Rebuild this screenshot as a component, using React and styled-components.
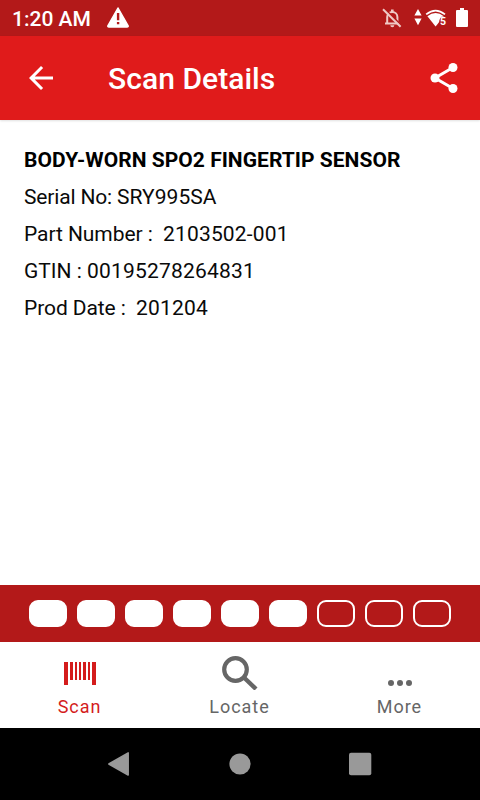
import React from 'react';
import styled, { createGlobalStyle } from 'styled-components';

const details = [
  { label: 'Serial No: ', value: 'SRY995SA', labelTracking: -0.16, valueTracking: 0.04 },
  { label: 'Part Number :  ', value: '2103502-001', labelTracking: -0.07, valueTracking: 0.18 },
  { label: 'GTIN : ', value: '00195278264831', labelTracking: 0, valueTracking: 0.2 },
  { label: 'Prod Date :  ', value: '201204', labelTracking: -0.08, valueTracking: 0.18 },
];

const TOTAL_STEPS = 9;
const FILLED_STEPS = 6;

const WarningIcon = () => (
  <svg width="24" height="22" viewBox="0 0 24 22">
    <path
      d="M12 1 L22 18.5 Q22.6 20 21 20 H3 Q1.4 20 2 18.5 Z"
      fill="#fff"
      stroke="#fff"
      strokeWidth="1.5"
      strokeLinejoin="round"
    />
    <path d="M10.9 6h2.4v7.2h-2.4zM10.9 15h2.4v2.3h-2.4z" fill="#b31919" />
  </svg>
);

const BellOffIcon = () => (
  <svg width="20" height="20" viewBox="0 0 20 20" fill="none" stroke="#f0c9c5">
    <path d="M5.2 15.2V9a5.1 5.1 0 0 1 10.2 0v6.2M3 15.4h14.5" strokeWidth="2" />
    <path d="M10.3 4V1.5" strokeWidth="2.6" />
    <path d="M8.3 17.2h4a2 2 0 0 1-4 0z" fill="#f0c9c5" stroke="none" />
    <path d="M2.2.2 19.4 17.4" stroke="#b31919" strokeWidth="1.6" />
    <path d="M1 1.2 18.6 18.8" strokeWidth="2" />
  </svg>
);

const DataIcon = () => (
  <svg width="8" height="18" viewBox="0 0 8 18" fill="#fff">
    <path d="M4 0 7.6 6.6H.4zM4 16.2.4 9.4h7.2z" />
  </svg>
);

const WifiIcon = () => (
  <svg width="23" height="19" viewBox="0 0 23 19">
    <path d="M1.2 5.4Q10.5-2.2 20 5.4" fill="none" stroke="#fff" strokeWidth="1.8" />
    <path d="M2.4 7.2Q10.6.9 18.8 7.2L10.6 17.6z" fill="#fff" />
    <path d="M14.5 7.8H23V19h-9z" fill="#b31919" />
    <path d="M12.2 7h4.6l-4.6 7z" fill="#fff" />
    <text x="15" y="16" fill="#fff" fontFamily="Roboto, sans-serif" fontSize="10.5" fontWeight="700">
      5
    </text>
  </svg>
);

const BatteryIcon = () => (
  <svg width="12" height="20" viewBox="0 0 12 20" fill="#fff">
    <path d="M4 0h4v2h3q1 0 1 1v15q0 1-1 1H1q-1 0-1-1V3q0-1 1-1h3z" />
  </svg>
);

const BackIcon = () => (
  <svg width="36" height="36" viewBox="0 0 24 24" fill="#fff">
    <path d="M20 11H7.83l5.59-5.59L12 4l-8 8 8 8 1.41-1.41L7.83 13H20v-2z" />
  </svg>
);

const ShareIcon = () => (
  <svg width="36" height="36" viewBox="0 0 24 24">
    <path d="M18 5 6 12l12 7" fill="none" stroke="#fff" strokeWidth="2" />
    <g fill="#fff">
      <circle cx="18" cy="5" r="3" />
      <circle cx="6" cy="12" r="3" />
      <circle cx="18" cy="19" r="3" />
    </g>
  </svg>
);

const BarcodeIcon = () => (
  <svg width="36" height="36" viewBox="0 0 36 36" fill="currentColor">
    <path d="M2 8h4v23H2zM8 8h3v18H8zM13 8h2v18h-2zM17 8h2v18h-2zM21 8h3v18h-3zM26 8h2v18h-2zM30 8h4v23h-4z" />
  </svg>
);

const SearchIcon = () => (
  <svg width="36" height="36" viewBox="0 0 36 36" fill="none" stroke="currentColor">
    <circle cx="13.5" cy="15.5" r="11.3" strokeWidth="4.2" />
    <path d="M20.5 22.5 23 25" strokeWidth="3.6" />
    <path d="M22.5 24 34 35" strokeWidth="4.4" />
  </svg>
);

const MoreIcon = () => (
  <svg width="36" height="36" viewBox="0 0 36 36" fill="currentColor">
    <circle cx="9" cy="29" r="3" />
    <circle cx="18" cy="29" r="3" />
    <circle cx="27" cy="29" r="3" />
  </svg>
);

const tabs = [
  { label: 'Scan', icon: <BarcodeIcon />, active: true },
  { label: 'Locate', icon: <SearchIcon /> },
  { label: 'More', icon: <MoreIcon /> },
];

const App = () => {
  return (
    <>
      <GlobalStyle />
      <Screen>
        <StatusBar>
          <Clock>1:20 AM</Clock>
          <WarningIcon />
          <StatusIcons>
            <BellOffIcon />
            <Signal>
              <DataIcon />
              <WifiIcon />
            </Signal>
            <BatteryIcon />
          </StatusIcons>
        </StatusBar>
        <AppBar>
          <IconButton aria-label="Back">
            <BackIcon />
          </IconButton>
          <Title>Scan Details</Title>
          <IconButton aria-label="Share">
            <ShareIcon />
          </IconButton>
        </AppBar>
        <Content>
          <ProductName>BODY-WORN SPO2 FINGERTIP SENSOR</ProductName>
          {details.map(({ label, value, labelTracking, valueTracking }) => (
            <Detail key={label}>
              <Tracked $tracking={labelTracking}>{label}</Tracked>
              <Tracked $tracking={valueTracking}>{value}</Tracked>
            </Detail>
          ))}
        </Content>
        <Steps>
          {Array.from({ length: TOTAL_STEPS }, (_, i) => (
            <Step key={i} $filled={i < FILLED_STEPS} />
          ))}
        </Steps>
        <TabBar>
          {tabs.map(({ label, icon, active }) => (
            <Tab key={label} $active={active}>
              {icon}
              <span>{label}</span>
            </Tab>
          ))}
        </TabBar>
        <SystemNav>
          <svg width="24" height="26" viewBox="0 0 24 26">
            <path d="M.8 13 20.2 1.9v22.2z" fill="#999" stroke="#999" strokeWidth="1.5" strokeLinejoin="round" />
          </svg>
          <svg width="24" height="26" viewBox="0 0 24 26">
            <circle cx="12" cy="13" r="10.6" fill="#999" />
          </svg>
          <svg width="24" height="26" viewBox="0 0 24 26">
            <rect x="1" y="1.7" width="22.3" height="22.6" rx="2" fill="#999" />
          </svg>
        </SystemNav>
      </Screen>
    </>
  );
};

const GlobalStyle = createGlobalStyle`
  * {
    box-sizing: border-box;
  }
  body {
    margin: 0;
    font-family: Roboto, sans-serif;
  }
  svg {
    display: block;
    flex-shrink: 0;
  }
`;

const Screen = styled.div`
  width: 480px;
  height: 800px;
  display: flex;
  flex-direction: column;
  background-color: #fff;
  overflow: hidden;
`;

const StatusBar = styled.div`
  height: 36px;
  padding: 0 12px;
  display: flex;
  align-items: center;
  background-color: #b31919;
`;

const Clock = styled.span`
  width: 94px;
  padding-top: 2px;
  font-size: 21px;
  line-height: 24px;
  font-weight: 500;
  color: #fff;
`;

const StatusIcons = styled.div`
  margin-left: auto;
  display: flex;
  align-items: center;
  gap: 8px;
`;

const Signal = styled.div`
  margin-left: 4px;
  display: flex;
  align-items: center;
  gap: 3px;
`;

const AppBar = styled.header`
  height: 84px;
  padding: 0 18px 0 23px;
  display: flex;
  align-items: center;
  background-color: #e01b1b;
  box-shadow: 0 1px 2px rgba(0, 0, 0, 0.12);
`;

const IconButton = styled.button`
  padding: 0;
  border: 0;
  background: none;
`;

const Title = styled.h1`
  flex: 1;
  margin: 2px 0 0 49px;
  font-size: 30px;
  line-height: 36px;
  font-weight: 500;
  letter-spacing: 0.05px;
  color: #fff;
`;

const Content = styled.main`
  flex: 1;
  padding: 22px 24px;
  font-size: 21px;
  line-height: 37px;
  color: #0a0a0a;
`;

const Detail = styled.p`
  margin: 0;
  white-space: pre;
`;

const Tracked = styled.span`
  letter-spacing: ${({ $tracking }) => $tracking}px;
`;

const ProductName = styled(Detail)`
  font-weight: 700;
  letter-spacing: 0.03px;
  color: #000;
`;

const Steps = styled.div`
  height: 57px;
  display: flex;
  align-items: center;
  justify-content: center;
  gap: 10px;
  background-color: #b31919;
`;

const Step = styled.div`
  width: 38px;
  height: 27px;
  border: 2px solid #fff;
  border-radius: 9px;
  background-color: ${({ $filled }) => ($filled ? '#fff' : 'transparent')};
`;

const TabBar = styled.nav`
  height: 86px;
  padding-top: 12px;
  display: grid;
  grid-template-columns: repeat(3, 1fr);
`;

const Tab = styled.div`
  display: flex;
  flex-direction: column;
  align-items: center;
  font-size: 18px;
  line-height: 21px;
  letter-spacing: 0.95px;
  color: ${({ $active }) => ($active ? '#d41c1c' : '#666')};
  span {
    margin-top: 6px;
    padding-right: 1px;
  }
`;

const SystemNav = styled.div`
  height: 72px;
  display: flex;
  align-items: center;
  justify-content: center;
  gap: 96px;
  background-color: #000;
`;

export default App;
